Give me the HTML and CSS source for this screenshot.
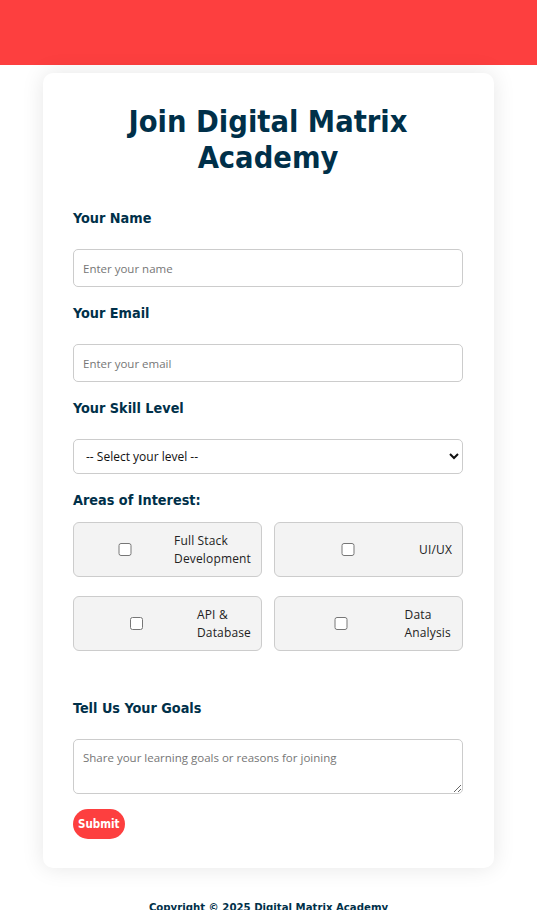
FILE: index.html
```html
<!DOCTYPE html>
<html lang="en">
<head>
<meta charset="utf-8">
<title>Join Digital Matrix Academy</title>
<link rel="stylesheet" href="styles.css">
</head>
<body>
<header class="topbar"></header>
<main class="card">
  <h1 class="title">Join Digital Matrix Academy</h1>
  <form class="form">
    <label class="label" for="name">Your Name</label>
    <input class="field" id="name" type="text" placeholder="Enter your name">

    <label class="label" for="email">Your Email</label>
    <input class="field" id="email" type="email" placeholder="Enter your email">

    <label class="label" for="level">Your Skill Level</label>
    <select class="field select" id="level">
      <option>-- Select your level --</option>
    </select>

    <div class="label label-tight">Areas of Interest:</div>
    <div class="interests">
      <label class="option"><input type="checkbox" class="check"><span class="opt-text">Full Stack Development</span></label>
      <label class="option"><input type="checkbox" class="check"><span class="opt-text">UI/UX</span></label>
      <label class="option"><input type="checkbox" class="check"><span class="opt-text">API &amp; Database</span></label>
      <label class="option"><input type="checkbox" class="check"><span class="opt-text">Data Analysis</span></label>
    </div>

    <label class="label" for="goals">Tell Us Your Goals</label>
    <textarea class="field textarea" id="goals" placeholder="Share your learning goals or reasons for joining"></textarea>

    <button type="button" class="submit">Submit</button>
  </form>
</main>
<footer class="footer">Copyright © 2025 Digital Matrix Academy</footer>
</body>
</html>
```

FILE: styles.css
```css
* { box-sizing: border-box; }

body {
  margin: 0;
  background: #ffffff;
  font-family: "Open Sans", "Noto Sans", sans-serif;
  color: #003049;
}

.topbar {
  height: 65px;
  background: #fd3f3f;
}

.card {
  width: 451px;
  margin: 8px auto 0;
  padding: 31px 31px 29px 30px;
  background: #ffffff;
  border-radius: 10px;
  box-shadow: 0 0 22px rgba(0, 0, 0, 0.10);
}

.title {
  margin: 0 0 32px;
  font-family: "DejaVu Sans Condensed", "DejaVu Sans", sans-serif;
  font-weight: bold;
  font-size: 30.5px;
  line-height: 36px;
  text-align: center;
  color: #003049;
}

.form {
  display: flex;
  flex-direction: column;
  align-items: flex-start;
}

.label {
  display: block;
  font-family: "DejaVu Sans Condensed", "DejaVu Sans", sans-serif;
  font-weight: bold;
  font-size: 14.3px;
  line-height: 20px;
  color: #003049;
  margin-bottom: 21px;
}

.label-tight { margin-bottom: 12px; }

.field {
  width: 100%;
  height: 38px;
  margin: 0 0 16px;
  padding: 0 9px;
  border: 1px solid #cccccc;
  border-radius: 5px;
  font-family: "Open Sans", sans-serif;
  font-size: 11.5px;
  color: #222;
  background: #fff;
}

.field::placeholder { color: #767676; }

.select {
  height: 35px;
  margin-bottom: 16px;
  padding-left: 8px;
  font-size: 12px;
  color: #111;
}

.interests {
  width: 100%;
  display: grid;
  grid-template-columns: 1fr 1fr;
  column-gap: 12px;
  row-gap: 19px;
  margin-bottom: 47px;
}

.option {
  display: flex;
  align-items: center;
  height: 55px;
  padding: 0 10px;
  background: #f3f3f3;
  border: 1px solid #cccccc;
  border-radius: 6px;
  font-family: "Open Sans", sans-serif;
  font-size: 12px;
  line-height: 18px;
  color: #222;
}

.check {
  width: 100%;
  height: 13px;
  margin: 0 12px 0 4px;
}

.opt-text { min-width: min-content; letter-spacing: 0.15px; }

.textarea {
  height: 55px;
  padding: 10px 9px;
  margin-bottom: 15px;
  resize: vertical;
  line-height: 16px;
}

.submit {
  height: 30px;
  padding: 0 5px;
  border: none;
  border-radius: 15px;
  background: #fd3f3f;
  color: #ffffff;
  font-family: "DejaVu Sans Condensed", "DejaVu Sans", sans-serif;
  font-weight: bold;
  font-size: 11.5px;
}

.footer {
  padding: 31px 0 20px;
  text-align: center;
  font-family: "DejaVu Sans Condensed", "DejaVu Sans", sans-serif;
  font-weight: bold;
  font-size: 11.3px;
  line-height: 18px;
  color: #003049;
}
```
